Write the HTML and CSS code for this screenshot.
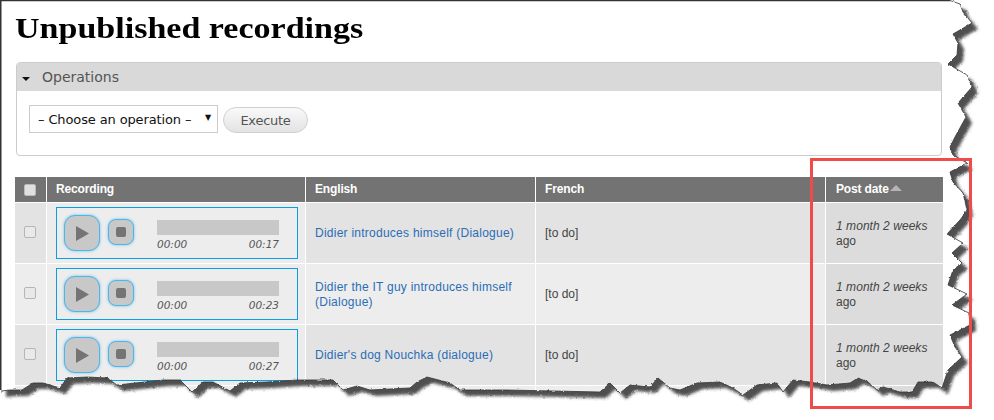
FILE: index.html
```html
<!DOCTYPE html>
<html lang="en">
<head>
<meta charset="utf-8">
<title>Unpublished recordings</title>
<link rel="stylesheet" href="styles.css">
</head>
<body>
<main class="page">
  <h1 class="title">Unpublished recordings</h1>
  <section class="ops">
    <div class="ops-head"><span class="ops-caret"></span><span>Operations</span></div>
    <div class="ops-body">
      <div class="select"><span>– Choose an operation –</span><span class="select-caret">▼</span></div>
      <button class="btn">Execute</button>
    </div>
  </section>
  <table class="grid">
    <thead>
      <tr>
        <th class="c-check"><input class="cb cb-head" type="checkbox"></th>
        <th class="c-rec">Recording</th>
        <th class="c-en">English</th>
        <th class="c-fr">French</th>
        <th class="c-date">Post date<span class="sort"></span></th>
      </tr>
    </thead>
    <tbody>
      <tr class="odd">
        <td><input class="cb" type="checkbox"></td>
        <td class="rec-cell"><div class="player"><span class="pbtn play"><svg width="13" height="15" viewBox="0 0 13 15"><path d="M0 0L13 7.5L0 15Z"/></svg></span><span class="pbtn stop"><i></i></span><div class="track"><div class="bar"></div><div class="times"><span>00:00</span><span>00:17</span></div></div></div></td>
        <td><a href="#">Didier introduces himself (Dialogue)</a></td>
        <td>[to do]</td>
        <td class="date"><em>1 month 2 weeks</em> ago</td>
      </tr>
      <tr class="even">
        <td><input class="cb" type="checkbox"></td>
        <td class="rec-cell"><div class="player"><span class="pbtn play"><svg width="13" height="15" viewBox="0 0 13 15"><path d="M0 0L13 7.5L0 15Z"/></svg></span><span class="pbtn stop"><i></i></span><div class="track"><div class="bar"></div><div class="times"><span>00:00</span><span>00:23</span></div></div></div></td>
        <td><a href="#">Didier the IT guy introduces himself (Dialogue)</a></td>
        <td>[to do]</td>
        <td class="date"><em>1 month 2 weeks</em> ago</td>
      </tr>
      <tr class="odd">
        <td><input class="cb" type="checkbox"></td>
        <td class="rec-cell"><div class="player"><span class="pbtn play"><svg width="13" height="15" viewBox="0 0 13 15"><path d="M0 0L13 7.5L0 15Z"/></svg></span><span class="pbtn stop"><i></i></span><div class="track"><div class="bar"></div><div class="times"><span>00:00</span><span>00:27</span></div></div></div></td>
        <td><a href="#">Didier's dog Nouchka (dialogue)</a></td>
        <td>[to do]</td>
        <td class="date"><em>1 month 2 weeks</em> ago</td>
      </tr>
      <tr class="even last">
        <td></td><td></td><td></td><td></td><td class="date"></td>
      </tr>
    </tbody>
  </table>
</main>
<svg class="tear" width="994" height="420" viewBox="0 0 994 420" aria-hidden="true">
  <defs>
    <clipPath id="outside"><path d="M950 0.5L960 4L963 12L972 23L953 34L958 43L957 55L948 64L967 75L972 87L958 103L966 117L955 137L950 147L953 155L967 163L950 172L953 182L963 193L967 210L960 220L947 234L963 243L952 253L962 263L953 270L948 285L967 294L952 305L969 313L970 325L950 335L955 347L962 357L948 370L942 388L933 382L918 382L912 392L900 392L883 387L877 390L868 382L858 378L850 383L827 385L810 382L793 380L783 392L777 383L757 385L743 395L733 388L720 382L697 383L680 390L670 388L658 378L650 387L630 385L620 393L610 383L600 392L507 390L460 390L450 383L427 377L417 382L410 388L370 390L357 386L343 390L333 380L297 380L267 382L240 383L230 391L213 382L203 382L192 392L180 380L163 380L117 385L107 378L87 377L67 378L60 388L43 383L33 383L22 390L10 390L0 391L0 420L994 420L994 0L950 0Z"/></clipPath>
    <filter id="soft" x="-5%" y="-5%" width="110%" height="110%"><feGaussianBlur stdDeviation="1.6"/></filter>
    <filter id="rough" filterUnits="userSpaceOnUse" x="0" y="0" width="994" height="420">
      <feTurbulence type="fractalNoise" baseFrequency="0.3" numOctaves="2" seed="4" result="n"/>
      <feDisplacementMap in="SourceGraphic" in2="n" scale="2.5" xChannelSelector="R" yChannelSelector="G"/>
    </filter>
  </defs>
  <g filter="url(#rough)">
    <path class="tear-white" d="M950 0.5L960 4L963 12L972 23L953 34L958 43L957 55L948 64L967 75L972 87L958 103L966 117L955 137L950 147L953 155L967 163L950 172L953 182L963 193L967 210L960 220L947 234L963 243L952 253L962 263L953 270L948 285L967 294L952 305L969 313L970 325L950 335L955 347L962 357L948 370L942 388L933 382L918 382L912 392L900 392L883 387L877 390L868 382L858 378L850 383L827 385L810 382L793 380L783 392L777 383L757 385L743 395L733 388L720 382L697 383L680 390L670 388L658 378L650 387L630 385L620 393L610 383L600 392L507 390L460 390L450 383L427 377L417 382L410 388L370 390L357 386L343 390L333 380L297 380L267 382L240 383L230 391L213 382L203 382L192 392L180 380L163 380L117 385L107 378L87 377L67 378L60 388L43 383L33 383L22 390L10 390L0 391L0 420L994 420L994 0L950 0Z"/>
    <g clip-path="url(#outside)">
      <path class="tear-shadow" filter="url(#soft)" transform="translate(6 6)" d="M0 0L950 0L950 0.5L960 4L963 12L972 23L953 34L958 43L957 55L948 64L967 75L972 87L958 103L966 117L955 137L950 147L953 155L967 163L950 172L953 182L963 193L967 210L960 220L947 234L963 243L952 253L962 263L953 270L948 285L967 294L952 305L969 313L970 325L950 335L955 347L962 357L948 370L942 388L933 382L918 382L912 392L900 392L883 387L877 390L868 382L858 378L850 383L827 385L810 382L793 380L783 392L777 383L757 385L743 395L733 388L720 382L697 383L680 390L670 388L658 378L650 387L630 385L620 393L610 383L600 392L507 390L460 390L450 383L427 377L417 382L410 388L370 390L357 386L343 390L333 380L297 380L267 382L240 383L230 391L213 382L203 382L192 392L180 380L163 380L117 385L107 378L87 377L67 378L60 388L43 383L33 383L22 390L10 390L0 391Z"/>
    </g>
    <path class="tear-line" d="M950 0.5L960 4L963 12L972 23L953 34L958 43L957 55L948 64L967 75L972 87L958 103L966 117L955 137L950 147L953 155L967 163L950 172L953 182L963 193L967 210L960 220L947 234L963 243L952 253L962 263L953 270L948 285L967 294L952 305L969 313L970 325L950 335L955 347L962 357L948 370L942 388L933 382L918 382L912 392L900 392L883 387L877 390L868 382L858 378L850 383L827 385L810 382L793 380L783 392L777 383L757 385L743 395L733 388L720 382L697 383L680 390L670 388L658 378L650 387L630 385L620 393L610 383L600 392L507 390L460 390L450 383L427 377L417 382L410 388L370 390L357 386L343 390L333 380L297 380L267 382L240 383L230 391L213 382L203 382L192 392L180 380L163 380L117 385L107 378L87 377L67 378L60 388L43 383L33 383L22 390L10 390L1 391"/>
  </g>
  <path class="tear-frame" d="M0.75 390V0.5H950"/>
</svg>
<div class="highlight"></div>
</body>
</html>
```
FILE: styles.css
```css
html, body { margin: 0; padding: 0; background: #fff; overflow: hidden; }
body { width: 994px; height: 420px; position: relative; }
.page { padding: 14px 0 0 15px; width: 928px; }
.title { margin: 0 0 21px; font: bold 30px/27px "Liberation Serif", serif; color: #000; transform: scaleX(1.134); transform-origin: left center; width: 310px; white-space: nowrap; }
.ops { margin-left: 1px; width: 924px; height: 92px; border: 1px solid #ccc; border-radius: 4px; overflow: hidden; margin-bottom: 21px; }
.ops-head { height: 28px; background: #d9d9d9; display: flex; align-items: center; font: 14px "DejaVu Sans", sans-serif; color: #555; }
.ops-caret { width: 0; height: 0; margin: 3px 12px 0 5px; border: 4px solid transparent; border-top: 4px solid #111; border-bottom: 0; }
.ops-body { display: flex; align-items: flex-end; padding: 14px 0 0 12px; gap: 5px; }
.select { box-sizing: border-box; width: 189px; height: 28px; border: 1px solid #ccc; display: flex; justify-content: space-between; align-items: center; padding: 0 6px 0 8px; font: 13px "DejaVu Sans", sans-serif; letter-spacing: -0.12px; color: #111; background: #fff; }
.select-caret { font-size: 8px; margin-top: -3px; }
.btn { box-sizing: border-box; width: 85px; height: 26px; padding: 0; border: 1px solid #d0d0d0; border-radius: 13px; background: linear-gradient(#f9f9f9, #e3e3e3); font: 13px "DejaVu Sans", sans-serif; letter-spacing: -0.25px; color: #555; }
.grid { width: 928px; table-layout: fixed; border-collapse: separate; border-spacing: 0; font: 12px/15px "Liberation Sans", sans-serif; }
.c-check { width: 31px; }
.c-rec { width: 259px; }
.c-en { width: 230px; }
.c-fr { width: 290px; }
th { height: 25px; box-sizing: border-box; background: #737373; color: #fff; text-align: left; padding: 0 0 0 9px; font-weight: bold; letter-spacing: -0.15px; }
.c-check { padding: 0; text-align: center; }
.grid .c-date { padding-left: 10px; }
th + th, td + td { border-left: 1px solid #fff; }
td { height: 61px; box-sizing: border-box; border-top: 1px solid #fff; padding: 1px 9px 0; color: #444; vertical-align: middle; }
td:first-child { padding: 0; text-align: center; }
.last td { height: 30px; }
.odd td { background: #e3e3e3; }
.even td { background: #ededed; }
.odd .rec-cell { background: #ececec; }
.grid td.date { background: #dcdcdc; padding-left: 10px; }
.grid .rec-cell { padding: 0 7px 0 9px; }
a { color: #2a6db5; text-decoration: none; letter-spacing: 0.25px; }
em { font-style: italic; letter-spacing: 0.05px; }
.sort { display: inline-block; width: 0; height: 0; margin-left: 1px; vertical-align: 2px; border: 6px solid transparent; border-bottom: 6px solid #b5b5b5; border-top: 0; }
.cb { appearance: none; box-sizing: border-box; display: block; width: 12px; height: 12px; margin: 0 0 0 9px; border: 1px solid #b5b5b5; border-radius: 2px; background: #e9e9e9; }
td .cb { margin-top: -2px; }
.cb-head { background: #e0e0e0; border-color: #bbb; }
.player { box-sizing: border-box; width: 242px; height: 52px; border: 1px solid #0a9fe3; background: #ededed; display: flex; align-items: flex-start; padding: 7px 0 0 7px; }
.pbtn { box-sizing: border-box; display: flex; align-items: center; justify-content: center; background: #c8c8c8; border: 1px solid #4fb4e8; box-shadow: 0 0 3px #6cc0ec; flex: none; }
.play { width: 36px; height: 36px; border-radius: 11px; }
.play svg { fill: #747474; margin-left: 1px; }
.stop { width: 26px; height: 26px; border-radius: 8px; margin: 4px 0 0 8px; }
.stop i { display: block; width: 10px; height: 10px; border-radius: 2px; background: #747474; }
.track { margin: 5px 0 0 23px; width: 122px; }
.bar { height: 15px; background: #c8c8c8; }
.times { display: flex; justify-content: space-between; margin-top: 3px; font: italic 10.5px/12px "DejaVu Sans", sans-serif; color: #555; }
.tear { position: absolute; left: 0; top: 0; }
.tear-white { fill: #fff; }
.tear-shadow { fill: #4f4f4f; }
.tear-line { fill: none; stroke: #333; stroke-width: 0.8; }
.tear-frame { fill: none; stroke: #333; stroke-width: 1.5; }
.highlight { position: absolute; left: 810px; top: 158px; width: 162px; height: 251px; box-sizing: border-box; border: 3px solid #ef4b48; }
```
